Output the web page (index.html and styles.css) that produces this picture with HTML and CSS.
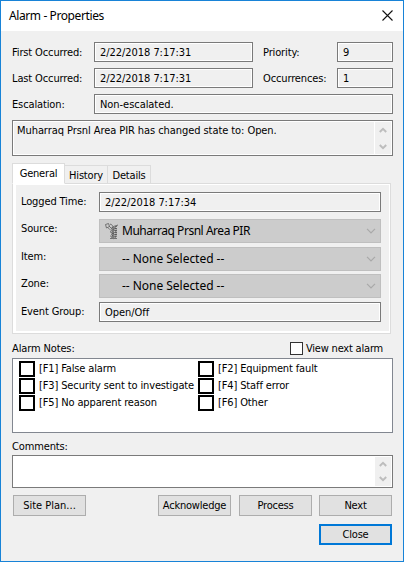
FILE: index.html
```html
<!DOCTYPE html>
<html lang="en">
<head>
<meta charset="utf-8">
<title>Alarm - Properties</title>
<link rel="stylesheet" href="styles.css">
</head>
<body>
<svg class="defs" width="0" height="0">
  <symbol id="up" viewBox="0 0 8 6"><path d="M.8 5 4 1.8 7.2 5" fill="none" stroke="#bdbdbd" stroke-width="2"/></symbol>
  <symbol id="down" viewBox="0 0 8 6"><path d="M.8 1 4 4.2 7.2 1" fill="none" stroke="#bdbdbd" stroke-width="2"/></symbol>
  <symbol id="chevron" viewBox="0 0 10 6"><path d="M1 .8 5 4.8 9 .8" fill="none" stroke="#a9a9a9" stroke-width="1.2"/></symbol>
</svg>
<main class="window">
  <header class="titlebar">
    <h1>Alarm - Properties</h1>
    <svg class="close" width="11" height="11" viewBox="0 0 11 11"><path d="M.5.5l10 10M10.5.5l-10 10" stroke="#111" stroke-width="1.1"/></svg>
  </header>
  <div class="body">
    <div class="row"><label>First Occurred:</label><div class="field date">2/22/2018 7:17:31</div><label class="second">Priority:</label><div class="field small">9</div></div>
    <div class="row"><label>Last Occurred:</label><div class="field date">2/22/2018 7:17:31</div><label class="second">Occurrences:</label><div class="field small">1</div></div>
    <div class="row"><label>Escalation:</label><div class="field wide">Non-escalated.</div></div>
    <div class="message"><p>Muharraq Prsnl Area PIR has changed state to: Open.</p>
      <div class="scroll"><svg width="8" height="6"><use href="#up"/></svg><svg width="8" height="6"><use href="#down"/></svg></div>
    </div>
    <nav class="tabs"><span class="tab active">General</span><span class="tab">History</span><span class="tab">Details</span></nav>
    <section class="panel"><div class="inner">
      <div class="prow logged"><label>Logged Time:</label><div class="field">2/22/2018 7:17:34</div></div>
      <div class="prow source"><label>Source:</label><div class="combo">
        <svg class="device" width="14" height="17" viewBox="0 0 14 17" fill="none"><path d="M.5 1.5l3-1 1 3-3 1.5zM4 3l3 3M5 1l2 1M7 4l6-2M6 5l6 1M6 7l6 1M5 9l7 1M6 11l6 1M5 13l6 1M5 15.5h7" stroke="#666" stroke-width=".9"/><path d="M7 2l3 3 2-3M3 5l4 3 4-3M5 8l3 3 3-3M6 11l3 3 2-3M6 14l2 2 3-2" stroke="#777" stroke-width=".8"/><path d="M8 4v12M11 3v12" stroke="#333" stroke-dasharray="1 1"/></svg>
        <span class="pir">Muharraq Prsnl Area PIR</span><svg class="chev" width="10" height="6"><use href="#chevron"/></svg></div></div>
      <div class="prow item"><label>Item:</label><div class="combo"><span class="none">-- None Selected --</span><svg class="chev" width="10" height="6"><use href="#chevron"/></svg></div></div>
      <div class="prow zone"><label>Zone:</label><div class="combo"><span class="none">-- None Selected --</span><svg class="chev" width="10" height="6"><use href="#chevron"/></svg></div></div>
      <div class="prow group"><label>Event Group:</label><div class="field">Open/Off</div></div>
    </div></section>
    <div class="noteshead"><label>Alarm Notes:</label><div class="viewnext"><i class="check"></i><span>View next alarm</span></div></div>
    <div class="notes">
      <div class="note"><i></i><span>[F1] False alarm</span></div><div class="note"><i></i><span>[F2] Equipment fault</span></div>
      <div class="note"><i></i><span>[F3] Security sent to investigate</span></div><div class="note"><i></i><span>[F4] Staff error</span></div>
      <div class="note"><i></i><span>[F5] No apparent reason</span></div><div class="note"><i></i><span>[F6] Other</span></div>
    </div>
    <label class="commentslabel">Comments:</label>
    <div class="comments"><div class="scroll"><svg width="8" height="6"><use href="#up"/></svg><svg width="8" height="6"><use href="#down"/></svg></div></div>
    <div class="buttons"><button class="siteplan">Site Plan...</button><button class="ack">Acknowledge</button><button>Process</button><button class="next">Next</button></div>
    <div class="buttons last"><button class="default">Close</button></div>
  </div>
</main>
</body>
</html>
```
FILE: styles.css
```css
* { box-sizing: border-box; }
html, body { margin: 0; }
.defs { position: absolute; }
.window {
  width: 404px; height: 562px; overflow: hidden;
  border: 1px solid #1883d7; background: #f0f0f0; color: #000;
  font: 11px/16px "DejaVu Sans Condensed", "DejaVu Sans", sans-serif;
  letter-spacing: -0.13px; white-space: nowrap;
}
.titlebar { height: 30px; background: #fff; display: flex; justify-content: space-between; padding: 0 10px 0 8px; }
.titlebar h1 { margin: 0; font: 12px/30px "Noto Sans", sans-serif; letter-spacing: -0.4px; }
.close { margin-top: 9px; }
.body { padding: 11px 10px 0 11px; }
.row { display: flex; width: 381px; height: 20px; margin-bottom: 6px; }
.row label { width: 82px; line-height: 22px; }
.row label.second { width: 84px; padding-left: 10px; }
.field { height: 20px; border: 1px solid #7a7a7a; box-shadow: inset 0 0 0 1px #fff; padding-left: 5px; line-height: 19px; letter-spacing: -0.05px; }
.date { width: 159px; }
.small { width: 56px; }
.wide { width: 299px; }
.message { width: 381px; height: 36px; border: 1px solid #7a7a7a; box-shadow: inset 0 0 0 1px #fff; display: flex; justify-content: space-between; }
.message p { margin: 0; padding-left: 4px; line-height: 19px; letter-spacing: -0.07px; }
.scroll { width: 18px; display: flex; flex-direction: column; align-items: center; justify-content: space-between; padding: 6px 0 5px; }
.message .scroll { border-left: 1px solid #fff; padding-right: 1px; }
.tabs { display: flex; align-items: flex-end; height: 21px; margin-top: 7px; position: relative; }
.tab { height: 19px; width: 43px; border: 1px solid #dcdcdc; border-left: 0; text-align: center; line-height: 19px; letter-spacing: -0.2px; }
.tab.active { width: 53px; height: 21px; background: #fff; border-left: 1px solid #dcdcdc; border-bottom-color: #fff; }
.panel { width: 379px; height: 151px; margin-top: -1px; border: 1px solid #dcdcdc; background: #fff; padding: 1px 1px 2px 3px; }
.inner { height: 146px; background: #f0f0f0; padding: 7px 8px 0 5px; }
.prow { display: flex; }
.prow label { width: 78px; line-height: 20px; }
.prow .field { width: 282px; }
.combo { width: 282px; height: 24px; border: 1px solid #bfbfbf; background: #ccc; display: flex; align-items: center; padding: 0 4px 0 5px; font: 12px/24px "Noto Sans", sans-serif; }
.pir { letter-spacing: -0.47px; margin-left: 3px; }
.none { margin-left: 17px; letter-spacing: -0.03px; }
.chev { margin-left: auto; }
.source { margin-top: 7px; }
.item { margin-top: 4px; }
.zone { margin-top: 3px; }
.group { margin-top: 4px; }
.noteshead { display: flex; justify-content: space-between; height: 16px; margin-top: 6px; padding-right: 10px; }
.noteshead label { line-height: 18px; }
.viewnext { display: flex; gap: 3px; padding-top: 1px; letter-spacing: -0.2px; }
.check { width: 13px; height: 13px; margin-top: 1px; border: 1px solid #333; background: #fff; }
.notes { width: 381px; height: 75px; margin-top: 2px; background: #fff; border: 1px solid #828790; display: grid; grid-template-columns: 179px 1fr; grid-auto-rows: 17px; padding: 2px 0 0 6px; align-content: start; }
.note { display: flex; gap: 4px; }
.note i { width: 16px; height: 16px; border: 2px solid #000; background: #fff; }
.commentslabel { display: block; margin-top: 6px; }
.comments { width: 381px; height: 33px; background: #fff; border: 1px solid #7a7a7a; display: flex; justify-content: flex-end; padding: 1px; }
.comments .scroll { width: 16px; background: #f0f0f0; padding: 4px 0; }
.buttons { display: flex; margin-top: 7px; padding-left: 1px; gap: 8px; width: 380px; }
button { width: 73px; height: 21px; padding: 1px 0 0; border: 1px solid #adadad; background: #e1e1e1; color: #000; font: inherit; letter-spacing: -0.2px; }
.siteplan { letter-spacing: 0; }
.ack { margin-left: 64px; }
.next { margin-left: -1px; }
.last { margin-top: 8px; justify-content: flex-end; }
.default { border: 2px solid #0078d7; padding: 0; }
```
